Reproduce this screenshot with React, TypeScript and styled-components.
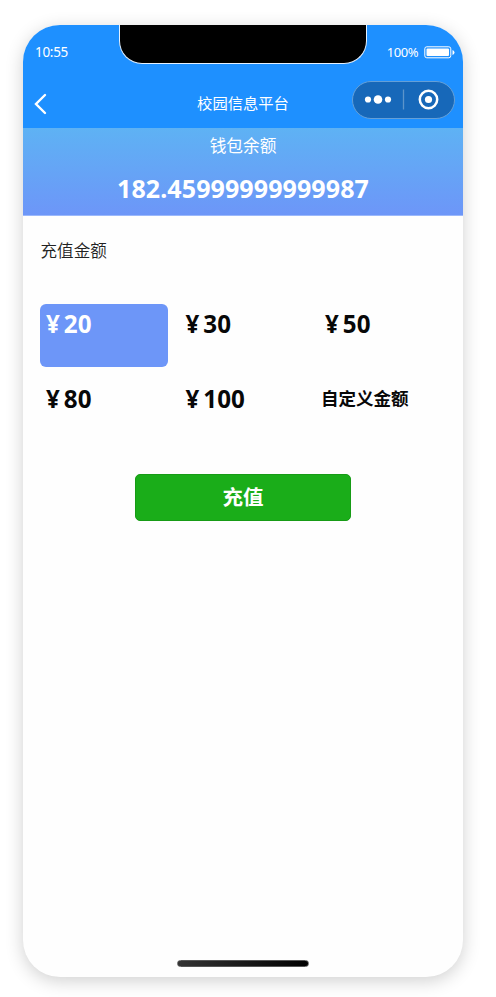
import React from "react";
import styled, { createGlobalStyle } from "styled-components";

const GlobalStyle = createGlobalStyle`
  body {
    margin: 0;
    background: #fff;
    font-family: "Noto Sans", "Noto Sans CJK SC", sans-serif;
  }
  * { box-sizing: border-box; }
`;

const Stage = styled.div`
  height: 997px;
  padding: 25px 0 0 23px;
  overflow: hidden;
`;

const Phone = styled.div`
  width: 440px;
  height: 952px;
  border-radius: 37px;
  overflow: hidden;
  background: #fefefe;
  box-shadow: 0 4px 18px rgba(0, 0, 0, 0.19);
  display: flex;
  flex-direction: column;
`;

const StatusBar = styled.div`
  height: 54px;
  padding: 0 8px 0 12px;
  background: #1e90ff;
  color: #fff;
  display: grid;
  grid-template-columns: 84px 248px 1fr;
`;

const Clock = styled.span`
  padding-top: 17px;
  font-size: 13.5px;
  line-height: 20px;
  letter-spacing: -0.3px;
`;

const Notch = styled.div`
  height: 38.5px;
  background: #000;
  border: solid #e4f1ff;
  border-width: 0 1.5px 1.5px;
  border-radius: 0 0 23px 23px;
`;

const Power = styled.div`
  height: 54px;
  padding-top: 17px;
  display: flex;
  justify-content: flex-end;
  gap: 6px;
  font-size: 13px;
  line-height: 20px;
  letter-spacing: -0.45px;
  white-space: nowrap;

  svg { margin-top: 4px; flex: none; }
`;

const NavBar = styled.div`
  height: 49px;
  padding: 0 8px 0 10px;
  background: #1e90ff;
  color: #fff;
  display: grid;
  grid-template-columns: 103px 1fr 103px;
`;

const BackIcon = styled.svg`
  margin-top: 14px;
`;

const NavTitle = styled.h1`
  margin: 12px 0 0;
  padding-right: 2px;
  text-align: center;
  font-size: 15.3px;
  line-height: 24px;
  font-weight: 400;
  white-space: nowrap;
`;

const Capsule = styled.div`
  width: 103px;
  height: 38px;
  margin-top: 2px;
  border: 1px solid #659fd6;
  border-radius: 19px;
  background: #1768b9;
`;

const Balance = styled.section`
  height: 88px;
  background: linear-gradient(#5eb2f4, #6d96f8);
  border-bottom: 1px solid #9bb8fb;
  color: #fff;
  text-align: center;
`;

const BalanceLabel = styled.div`
  padding-top: 5px;
  font-size: 16.7px;
  line-height: 25px;
`;

const BalanceValue = styled.div`
  padding-top: 13px;
  font-size: 25px;
  line-height: 34px;
  font-weight: 700;
  letter-spacing: 0.1px;
`;

const SectionTitle = styled.h2`
  margin: 22px 0 0 17.5px;
  font-size: 16.6px;
  line-height: 25px;
  font-weight: 350;
  color: #222;
`;

const Amounts = styled.div`
  margin: 41px 0 0 17px;
  display: grid;
  grid-template-columns: 127.5px 127.5px 127.5px;
  grid-auto-rows: 63px;
  column-gap: 12px;
  row-gap: 12px;
`;

const Amount = styled.button<{ $active?: boolean; $custom?: boolean }>`
  padding: ${(p) => (p.$custom ? "6px 0 0 2px" : "3px 0 0 6px")};
  border: 0;
  border-radius: 6px;
  background: ${(p) => (p.$active ? "#6d96f8" : "transparent")};
  color: ${(p) => (p.$active ? "#fff" : "#080808")};
  display: flex;
  align-items: flex-start;
  gap: 4px;
  font-family: inherit;
  font-weight: 700;
  font-size: ${(p) => (p.$custom ? "17.5px" : "24.2px")};
  line-height: ${(p) => (p.$custom ? "26px" : "33px")};
`;

const Submit = styled.button`
  width: 216px;
  height: 47px;
  margin: 32px 0 0 112px;
  padding: 0 0 1px;
  border: 1px solid #179b16;
  border-radius: 5px;
  background: #1aad19;
  color: #fff;
  font-family: inherit;
  font-size: 20.5px;
  line-height: 30px;
  font-weight: 700;
`;

const HomeIndicator = styled.div`
  width: 132px;
  height: 7px;
  margin: auto 0 10px 154px;
  border-radius: 4px;
  border: 1px solid #555;
  background: linear-gradient(90deg, #333, #000);
`;

const values = [20, 30, 50, 80, 100];

export default function App() {
  return (
    <Stage>
      <GlobalStyle />
      <Phone>
        <StatusBar>
          <Clock>10:55</Clock>
          <Notch />
          <Power>
            <span>100%</span>
            <svg width="31" height="13" viewBox="0 0 31 13">
              <rect x=".8" y=".8" width="26" height="11" rx="2" fill="none" stroke="#fff" strokeWidth="1" />
              <rect x="2.5" y="2.5" width="22.5" height="7.6" rx="1" fill="#fff" />
              <path d="M28.5 4v5q2-.6 2-2.5t-2-2.5" fill="#fff" />
            </svg>
          </Power>
        </StatusBar>
        <NavBar>
          <BackIcon width="16" height="22" viewBox="0 0 16 22">
            <path d="M12 2 3 11l9 9" fill="none" stroke="#fff" strokeWidth="2.4" strokeLinecap="round" />
          </BackIcon>
          <NavTitle>校园信息平台</NavTitle>
          <Capsule>
            <svg width="101" height="36" viewBox="0 0 101 36">
              <g fill="#fff">
                <circle cx="15" cy="17.5" r="3.1" />
                <circle cx="25" cy="17.5" r="4.3" />
                <circle cx="35" cy="17.5" r="3.1" />
                <circle cx="75.5" cy="17.5" r="3.6" />
              </g>
              <path d="M50.5 7.5v20" stroke="#5c94ca" strokeWidth="1.3" />
              <circle cx="75.5" cy="17.5" r="8.7" fill="none" stroke="#fff" strokeWidth="2.5" />
            </svg>
          </Capsule>
        </NavBar>
        <Balance>
          <BalanceLabel>钱包余额</BalanceLabel>
          <BalanceValue>182.45999999999987</BalanceValue>
        </Balance>
        <SectionTitle>充值金额</SectionTitle>
        <Amounts>
          {values.map((v) => (
            <Amount key={v} $active={v === 20}>
              <span>¥</span>
              <span>{v}</span>
            </Amount>
          ))}
          <Amount $custom>自定义金额</Amount>
        </Amounts>
        <Submit>充值</Submit>
        <HomeIndicator />
      </Phone>
    </Stage>
  );
}
